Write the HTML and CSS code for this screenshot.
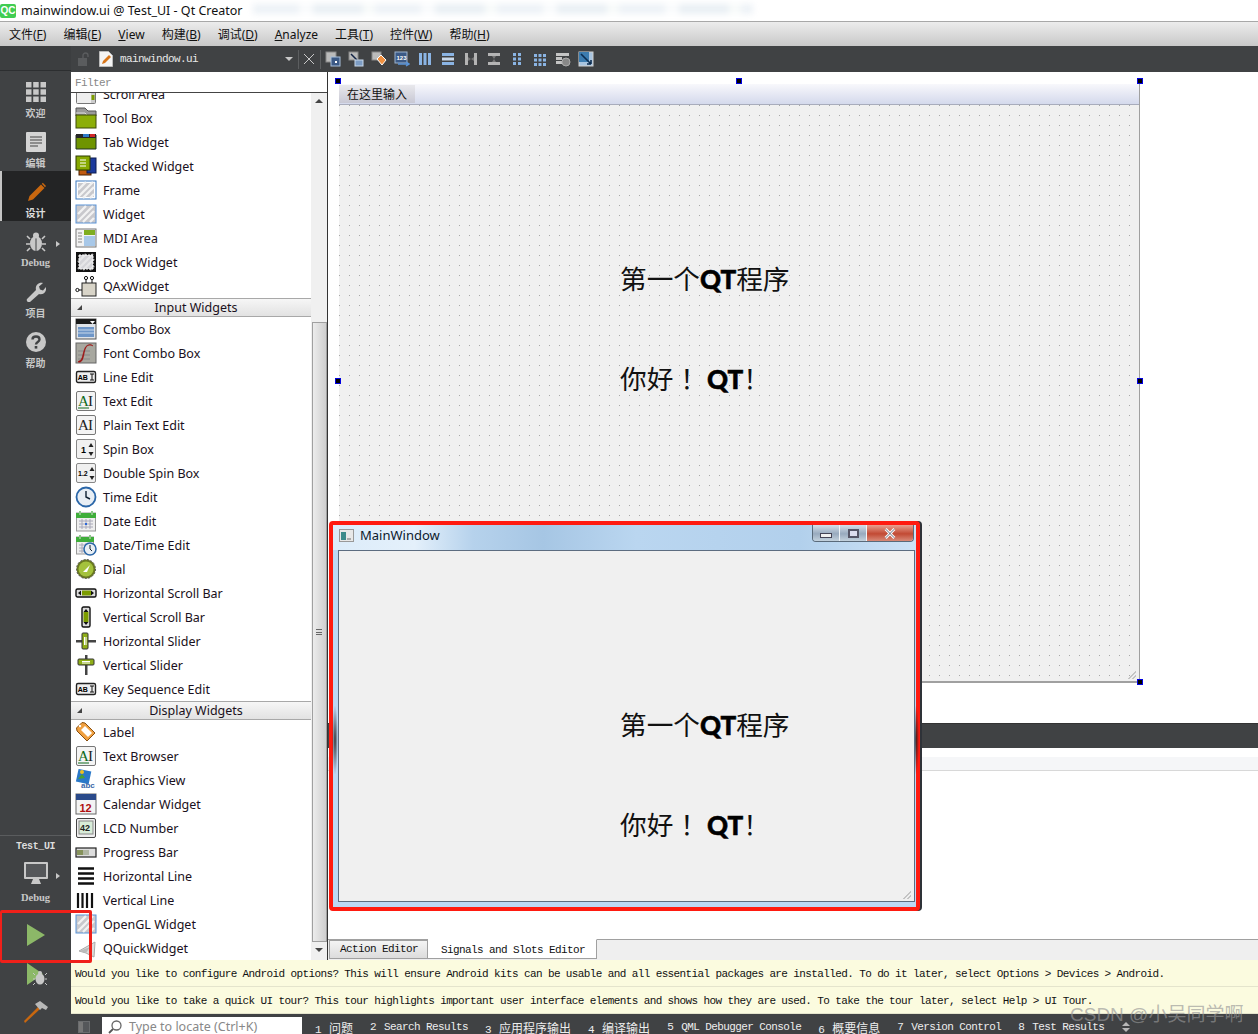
FILE: index.html
```html
<!DOCTYPE html>
<html lang="zh">
<head>
<meta charset="utf-8">
<title>mainwindow.ui @ Test_UI - Qt Creator</title>
<link rel="stylesheet" href="styles.css">
</head>
<body>
<svg class="defs" width="0" height="0" aria-hidden="true">
<defs>
<g id="hatch"><path d="M3 11l8-8M3 18L18 3M8 19L19 8M15 19l4-4" stroke="#f2f2f2" stroke-width="2.4" fill="none"/></g>
<symbol id="i-scroll" viewBox="0 0 22 22"><rect x="1.5" y="1.5" width="19" height="19" rx="1" fill="#eee" stroke="#777"/><rect x="16" y="2" width="4" height="18" fill="#ccc"/><rect x="16.5" y="12" width="3" height="5" fill="#7c9c00"/></symbol>
<symbol id="i-tool" viewBox="0 0 22 22"><path d="M1 1h9l3 3h8v5H1z" fill="#9a9a9a" stroke="#555"/><path d="M1 6h9l3 3h8M1 9h20" stroke="#ddd" fill="none"/><rect x="1" y="8" width="20" height="13" fill="#8cae08" stroke="#3c4a08"/></symbol>
<symbol id="i-tab" viewBox="0 0 22 22"><path d="M1 4h20v14H1z" fill="#6f9400" stroke="#232"/><rect x="1" y="3" width="20" height="4" fill="#262626"/><rect x="8" y="3" width="6" height="3" fill="#2d7ac8"/><rect x="15" y="3" width="5" height="3" fill="#d02828"/></symbol>
<symbol id="i-stack" viewBox="0 0 22 22"><rect x="4" y="9" width="12" height="11" fill="#c05a10" stroke="#4a2000"/><rect x="12" y="3" width="9" height="15" fill="#1c3a9c" stroke="#0c1c50"/><rect x="1" y="1" width="14" height="14" fill="#86a800" stroke="#2c3a00"/><path d="M5 5h6M5 8h6M5 11h6" stroke="#fff" stroke-width="1"/></symbol>
<symbol id="i-frame" viewBox="0 0 22 22"><rect x="1" y="2" width="20" height="18" fill="#fff" stroke="#3a78c0"/><rect x="3" y="4" width="16" height="14" fill="#c8c8cc"/><use href="#hatch"/></symbol>
<symbol id="i-widget" viewBox="0 0 22 22"><rect x="1" y="2" width="20" height="18" fill="#c8c8cc" stroke="#5a94d8"/><use href="#hatch"/></symbol>
<symbol id="i-mdi" viewBox="0 0 22 22"><rect x="1" y="2" width="20" height="18" fill="#f2f2f2" stroke="#777"/><rect x="9" y="3" width="11" height="5" fill="#7fae20"/><rect x="9" y="9" width="11" height="10" fill="#a8c8e8"/><path d="M3 6h4M3 9h4M3 12h4M3 15h4" stroke="#888"/></symbol>
<symbol id="i-dock" viewBox="0 0 22 22"><rect x="1" y="1" width="20" height="20" fill="#111"/><rect x="4" y="4" width="14" height="14" fill="#d4d4d8" stroke="#fff" stroke-dasharray="2 1"/><use href="#hatch" opacity=".6"/></symbol>
<symbol id="i-qax" viewBox="0 0 22 22"><rect x="7" y="8" width="14" height="13" fill="#d8d4c8" stroke="#222"/><path d="M11 8V4M17 8V4M7 15H3" stroke="#111"/><circle cx="11" cy="3" r="1.6" fill="#fff" stroke="#111"/><circle cx="17" cy="3" r="1.6" fill="#fff" stroke="#111"/><circle cx="2.4" cy="15" r="1.6" fill="#fff" stroke="#111"/></symbol>
<symbol id="i-combo" viewBox="0 0 22 22"><rect x="1" y="1" width="20" height="20" fill="#dfe3e8" stroke="#555"/><rect x="1" y="1" width="20" height="5" fill="#1c1c1c"/><path d="M15 3h5l-2.500 3z" fill="#fff"/><rect x="3" y="9" width="16" height="10" fill="#6e96c8"/><path d="M3 12h16M3 15h16" stroke="#c8d8ea"/></symbol>
<symbol id="i-font" viewBox="0 0 22 22"><rect x="1" y="1" width="20" height="20" fill="#a8a8a0" stroke="#666"/><path d="M3 9h12M3 13h12M3 17h12" stroke="#888"/><path d="M3 20c4 1 5-3 6-8s2-9 6-9c2 0 3 1 3 1-2-2-6-2-8 2s-2 9-4 12c-1 1-3 1-3 2z" fill="#9c1010" stroke="#9c1010" stroke-width=".6"/></symbol>
<symbol id="i-line" viewBox="0 0 22 22"><rect x="1.500" y="5.500" width="19" height="11" rx="1.500" fill="#eee" stroke="#222" stroke-width="1.400"/><text x="2.800" y="14" class="ic-t ic-7">AB</text><path d="M15 8h4M15 14h4M17 8v6" stroke="#111"/></symbol>
<symbol id="i-text" viewBox="0 0 22 22"><rect x="1.500" y="1.500" width="19" height="19" rx="1.500" fill="#f4f4f4" stroke="#777"/><text x="3" y="16" class="ic-s" fill="#0f6a1c">A</text><path d="M3 18h11" stroke="#0f6a1c"/><text x="13" y="16" class="ic-s" fill="#222">I</text></symbol>
<symbol id="i-plain" viewBox="0 0 22 22"><rect x="1.500" y="1.500" width="19" height="19" rx="1.500" fill="#f4f4f4" stroke="#777"/><text x="3" y="16" class="ic-s" fill="#222">A</text><text x="13" y="16" class="ic-s" fill="#222">I</text></symbol>
<symbol id="i-spin" viewBox="0 0 22 22"><rect x="1.500" y="1.500" width="19" height="19" rx="1.500" fill="#f0f0f0" stroke="#888"/><text x="6" y="15" class="ic-t ic-9">1</text><path d="M16 5l2.500 4h-5zM16 18l2.500-4h-5z" fill="#222"/></symbol>
<symbol id="i-dspin" viewBox="0 0 22 22"><rect x="1.500" y="1.500" width="19" height="19" rx="1.500" fill="#f0f0f0" stroke="#888"/><text x="3" y="14" class="ic-t ic-7">1.2</text><path d="M17 5l2.500 4h-5zM17 18l2.500-4h-5z" fill="#222"/></symbol>
<symbol id="i-time" viewBox="0 0 22 22"><circle cx="11" cy="11" r="9.500" fill="#e8eef4" stroke="#2a66a8" stroke-width="1.800"/><path d="M11 5v6l4 2" stroke="#123" stroke-width="1.400" fill="none"/></symbol>
<symbol id="i-date" viewBox="0 0 22 22"><rect x="1.500" y="3" width="19" height="18" fill="#eee" stroke="#999"/><rect x="1" y="3" width="20" height="5" fill="#3fae3a"/><path d="M5 1v4M17 1v4" stroke="#8cc888" stroke-width="2"/><path d="M4 11h14M4 14h14M4 17h14M7 9v10M11 9v10M15 9v10" stroke="#a8a8b8"/><rect x="10" y="13" width="2" height="2" fill="#2a66d8"/></symbol>
<symbol id="i-dt" viewBox="0 0 22 22"><rect x="1.500" y="3" width="17" height="17" fill="#eee" stroke="#999"/><rect x="1" y="3" width="18" height="5" fill="#3fae3a"/><path d="M5 1v4M15 1v4" stroke="#8cc888" stroke-width="2"/><path d="M4 11h12M4 14h12M4 17h12M7 9v10M11 9v10" stroke="#a8a8b8"/><circle cx="15" cy="15" r="6" fill="#e8eef4" stroke="#2a66a8" stroke-width="1.500"/><path d="M15 11v4l2 2" stroke="#123" fill="none"/></symbol>
<symbol id="i-dial" viewBox="0 0 22 22"><circle cx="11" cy="11" r="9.500" fill="#6a7a20" stroke-dasharray="2 1.500" stroke="#555"/><circle cx="11" cy="11" r="7.500" fill="#a4c23c"/><path d="M8 14l7-7-3 7z" fill="#fff"/></symbol>
<symbol id="i-hscr" viewBox="0 0 22 22"><rect x="1" y="7" width="20" height="8" rx="1.500" fill="#ddd" stroke="#111" stroke-width="1.400"/><rect x="7" y="8.500" width="9" height="5" fill="#7c9c00"/><path d="M3 11l3-2.500v5zM19 11l-3-2.500v5z" fill="#111"/></symbol>
<symbol id="i-vscr" viewBox="0 0 22 22"><rect x="7" y="1" width="8" height="20" rx="1.500" fill="#ddd" stroke="#111" stroke-width="1.400"/><rect x="8.500" y="6" width="5" height="10" fill="#7c9c00"/><path d="M11 3l-2.500 3h5zM11 19l-2.500-3h5z" fill="#111"/></symbol>
<symbol id="i-hsl" viewBox="0 0 22 22"><rect x="1" y="10" width="20" height="2.500" fill="#444"/><rect x="7" y="3" width="6" height="16" rx="1" fill="#8fae18" stroke="#333"/><path d="M9.500 7v8M11 7v8" stroke="#fff"/></symbol>
<symbol id="i-vsl" viewBox="0 0 22 22"><rect x="10" y="1" width="2.500" height="20" fill="#444"/><rect x="3" y="5" width="16" height="6" rx="1" fill="#8fae18" stroke="#333"/><path d="M7 7.500h8M7 9h8" stroke="#fff"/></symbol>
<symbol id="i-label" viewBox="0 0 22 22"><path d="M1.500 7L7 1.500l3 .5 10 10-8 8L2 10z" fill="#f0a040" stroke="#8a5010"/><path d="M6 9l4-4 7 7-4 4z" fill="#fff"/><circle cx="5" cy="5" r="1.200" fill="#fff"/></symbol>
<symbol id="i-graph" viewBox="0 0 22 22"><rect x="2" y="1" width="13" height="13" fill="#2a78c8" transform="rotate(12 8 8)"/><path d="M3 10l4-5 3 4z" fill="#4aa030"/><circle cx="7" cy="3" r="2" fill="#f0c020"/><text x="6" y="19" class="ic-t ic-9b" fill="#3a66a8">abc</text></symbol>
<symbol id="i-cal" viewBox="0 0 22 22"><rect x="1" y="1" width="20" height="20" fill="#f4f4f4" stroke="#666"/><rect x="1" y="1" width="20" height="6" fill="#2a4a8a"/><text x="4.500" y="19" class="ic-t ic-11" fill="#b01010">12</text></symbol>
<symbol id="i-lcd" viewBox="0 0 22 22"><rect x="1.500" y="1.500" width="19" height="19" rx="1.500" fill="#eee" stroke="#444"/><rect x="4" y="4" width="14" height="13" fill="#d8ecd8" stroke="#888"/><text x="5" y="14" class="ic-t ic-9" fill="#222">42</text></symbol>
<symbol id="i-prog" viewBox="0 0 22 22"><rect x="1" y="7" width="20" height="9" fill="#ddd" stroke="#222" stroke-width="1.200"/><path d="M3 9v5M5 9v5M7 9v5" stroke="#6a7a30" stroke-width="1.500"/><path d="M9 9v5M11 9v5M13 9v5" stroke="#a0a890" stroke-width="1.500"/></symbol>
<symbol id="i-hline" viewBox="0 0 22 22"><path d="M3 3.500h16M3 8.500h16M3 13.500h16M3 18.500h16" stroke="#111" stroke-width="2.600"/></symbol>
<symbol id="i-vline" viewBox="0 0 22 22"><path d="M3 4v15M7.500 4v15M12 4v15M17 4v15" stroke="#111" stroke-width="2.200"/></symbol>
<symbol id="i-quick" viewBox="0 0 22 22"><path d="M4 14L20 5l-1 15-8-4z" fill="#ddd" stroke="#aaa"/><path d="M4 14l11-4-4 6z" fill="#bbb"/></symbol>
<symbol id="t-a" viewBox="0 0 16 16"><rect x="1" y="1" width="10" height="10" fill="#bbb" stroke="#888"/><rect x="6" y="6" width="9" height="9" fill="#3c5a86" stroke="#a8c0dc"/><rect x="10" y="10" width="2" height="2" fill="#fff"/></symbol>
<symbol id="t-b" viewBox="0 0 16 16"><rect x="1" y="1" width="9" height="8" fill="#bbb" stroke="#888"/><path d="M3 3l6 6" stroke="#124" stroke-width="1.500"/><rect x="7" y="9" width="8" height="6" fill="#7c9cc4" stroke="#c8d8ea"/></symbol>
<symbol id="t-c" viewBox="0 0 16 16"><rect x="1" y="1" width="9" height="8" fill="#bbb" stroke="#888"/><path d="M6 8l4-4 5 5-4 5z" fill="#f09040" stroke="#fff"/></symbol>
<symbol id="t-d" viewBox="0 0 16 16"><rect x="1" y="1" width="12" height="11" fill="#3c5a86" stroke="#9cb4d0"/><path d="M4 13h10M12 11l3 2-3 2" stroke="#5a94d8" fill="none" stroke-width="1.500"/><text x="2.500" y="9" class="ic-t ic-6" fill="#fff">123</text></symbol>
<symbol id="t-e" viewBox="0 0 16 16"><rect x="2" y="2" width="3" height="12" fill="#8ab4e4"/><rect x="6.500" y="2" width="3" height="12" fill="#8ab4e4"/><rect x="11" y="2" width="3" height="12" fill="#8ab4e4"/></symbol>
<symbol id="t-f" viewBox="0 0 16 16"><rect x="2" y="2" width="12" height="3" fill="#8ab4e4"/><rect x="2" y="6.500" width="12" height="3" fill="#c8d8ea"/><rect x="2" y="11" width="12" height="3" fill="#8ab4e4"/></symbol>
<symbol id="t-g" viewBox="0 0 16 16"><path d="M2 2h3v12H2zM11 2h3v12h-3z" fill="#b4b4b4"/><path d="M5 6l3 2-3 2zM11 6L8 8l3 2z" fill="#777"/></symbol>
<symbol id="t-h" viewBox="0 0 16 16"><path d="M2 2h12v3H2zM2 11h12v3H2z" fill="#b4b4b4"/><path d="M6 5l2 3 2-3zM6 11l2-3 2 3z" fill="#777"/></symbol>
<symbol id="t-i" viewBox="0 0 16 16"><path d="M4 2h3v3H4zM9 2h3v3H9zM4 6.500h3v3H4zM9 6.500h3v3H9zM4 11h3v3H4zM9 11h3v3H9z" fill="#8ab4e4"/></symbol>
<symbol id="t-j" viewBox="0 0 16 16"><path d="M2 3h3v3H2zM6.500 3h3v3h-3zM11 3h3v3h-3zM2 7.500h3v3H2zM6.500 7.500h3v3h-3zM11 7.500h3v3h-3zM2 12h3v3H2zM6.500 12h3v3h-3zM11 12h3v3h-3z" fill="#8ab4e4"/></symbol>
<symbol id="t-k" viewBox="0 0 16 16"><path d="M1 2h13v3H1zM1 6h6v3H1zM1 10h6v3H1z" fill="#c4c4c4"/><circle cx="11" cy="11" r="4" fill="#888" stroke="#aaa"/></symbol>
<symbol id="t-l" viewBox="0 0 16 16"><rect x="1" y="1" width="14" height="14" fill="#a8c4e0" stroke="#d0d0d0"/><rect x="1" y="1" width="10" height="10" fill="#3c7cb0"/><path d="M3 3l10 10M13 13v-4M13 13H9" stroke="#0c2c50" stroke-width="1.600" fill="none"/></symbol>
</defs>
</svg>

<header class="titlebar">
  <span class="qc">QC</span>
  <span class="title-text">mainwindow.ui @ Test_UI - Qt Creator</span>
  <span class="smudge"></span>
</header>
<nav class="menubar">
  <span>文件(<u>F</u>)</span><span>编辑(<u>E</u>)</span><span><u>V</u>iew</span><span>构建(<u>B</u>)</span><span>调试(<u>D</u>)</span><span><u>A</u>nalyze</span><span>工具(<u>T</u>)</span><span>控件(<u>W</u>)</span><span>帮助(<u>H</u>)</span>
</nav>

<div class="app">
  <aside class="sidebar">
    <div class="side-top"></div>
    <div class="mode">
      <svg class="mi" viewBox="0 0 20 20"><path d="M0 0h5.500v5.500H0zM7.200 0h5.500v5.500H7.200zM14.500 0H20v5.500h-5.500zM0 7.200h5.500v5.500H0zM7.200 7.200h5.500v5.500H7.200zM14.500 7.200H20v5.500h-5.500zM0 14.500h5.500V20H0zM7.200 14.500h5.500V20H7.200zM14.500 14.500H20V20h-5.500z" fill="#c8c8c8"/></svg>
      <span>欢迎</span>
    </div>
    <div class="mode">
      <svg class="mi" viewBox="0 0 20 20"><rect width="20" height="20" rx="1" fill="#d4d4d4"/><path d="M4 5h12M4 8h12M4 11h12M4 14h8" stroke="#444" stroke-width="1.100"/></svg>
      <span>编辑</span>
    </div>
    <div class="mode active">
      <svg class="mi" viewBox="0 0 20 20"><path d="M2 19l1.500-5L15 2.500l3.500 3.500L7 17.500z" fill="#c8670f"/><path d="M15.800 1.800l1-1 3.200 3.200-1 1.200z" fill="#c8670f"/></svg>
      <span>设计</span>
    </div>
    <div class="mode">
      <svg class="mi" viewBox="0 0 20 20"><ellipse cx="10" cy="11.500" rx="6" ry="7.500" fill="#c8c8c8"/><path d="M10 4v15" stroke="#404244"/><circle cx="10" cy="3.500" r="3" fill="#c8c8c8"/><path d="M4 7L1 4M4 12H0M4 16l-3 3M16 7l3-3M16 12h4M16 16l3 3" stroke="#c8c8c8" stroke-width="1.600"/></svg>
      <span class="serif">Debug</span>
      <i class="caret"></i>
    </div>
    <div class="mode">
      <svg class="mi" viewBox="0 0 20 20"><path d="M1 17L10 8c-1-4 2-8 7-7l-4 3.500 1 3 3 1L20 5c1 5-3 8-7 7l-9 8c-2 1-4-1-3-3z" fill="#c8c8c8"/></svg>
      <span>项目</span>
    </div>
    <div class="mode">
      <svg class="mi" viewBox="0 0 20 20"><circle cx="10" cy="10" r="10" fill="#c8c8c8"/><path d="M6.500 7.500C6.500 3.500 13.500 3.500 13.500 7.500c0 2.500-3.500 2.500-3.500 5" fill="none" stroke="#404244" stroke-width="2.400"/><rect x="8.700" y="14" width="2.600" height="2.600" fill="#404244"/></svg>
      <span>帮助</span>
    </div>
    <div class="kit">
      <span class="kit-name">Test_UI</span>
      <svg class="monitor" viewBox="0 0 26 24"><rect x="1" y="1" width="24" height="17" rx="1" fill="#c8c8c8"/><rect x="3" y="3" width="20" height="13" fill="#55575a"/><path d="M10 18h6l2 5H8z" fill="#c8c8c8"/></svg>
      <span class="serif">Debug</span>
      <i class="caret kit-caret"></i>
    </div>
    <div class="act act-run"><svg width="18" height="22" viewBox="0 0 18 22"><path d="M0 0l18 11L0 22z" fill="#8cb868"/></svg></div>
    <div class="act act-dbg"><svg width="20" height="24" viewBox="0 0 20 24"><path d="M0 0l16 11L0 22z" fill="#8cb868"/><ellipse cx="13" cy="16" rx="4.500" ry="5.500" fill="#c8c8c8"/><circle cx="13" cy="10" r="2" fill="#c8c8c8"/><path d="M8 12l-2-2M8 16H6M8 20l-2 2M18 12l2-2M18 16h2M18 20l2 2M13 11v10" stroke="#c8c8c8"/></svg></div>
    <div class="act act-build"><svg width="24" height="24" viewBox="0 0 24 24"><path d="M1 23l-1-2L14 7l2 2z" fill="#c8670f"/><path d="M11 4l5-3 8 6-2 3-4-2-2 2z" fill="#b8b8b8"/></svg></div>
  </aside>

  <div class="main">
    <div class="toolbar">
      <div class="tb-left">
        <svg class="lock" viewBox="0 0 14 14"><rect x="1" y="6" width="9" height="8" fill="#5a5c5e"/><path d="M6 6V3.500a2.500 2.500 0 0 1 5 0V5" fill="none" stroke="#5a5c5e" stroke-width="1.400"/></svg>
        <svg class="doc" viewBox="0 0 14 16"><path d="M.5.500h9l4 4v11H.500z" fill="#f4f4f4" stroke="#bbb"/><path d="M3 13l1-3 6-6 2 2-6 6z" fill="#d8761a"/></svg>
        <span class="fname">mainwindow.ui</span>
        <i class="tb-arrow"></i>
        <i class="tb-sep"></i>
        <svg class="tb-x" viewBox="0 0 10 10"><path d="M0 0l10 10M10 0L0 10" stroke="#c8c8c8"/></svg>
        <i class="tb-sep"></i>
      </div>
      <div class="tb-icons">
        <svg><use href="#t-a"/></svg><svg><use href="#t-b"/></svg><svg><use href="#t-c"/></svg><svg><use href="#t-d"/></svg><svg><use href="#t-e"/></svg><svg><use href="#t-f"/></svg><svg><use href="#t-g"/></svg><svg><use href="#t-h"/></svg><svg><use href="#t-i"/></svg><svg><use href="#t-j"/></svg><svg><use href="#t-k"/></svg><svg><use href="#t-l"/></svg>
      </div>
    </div>

    <div class="workspace">
      <section class="box">
        <div class="filter">Filter</div>
        <div class="box-body">
          <ul class="list">
            <li class="row"><svg><use href="#i-scroll"/></svg>Scroll Area</li>
            <li class="row"><svg><use href="#i-tool"/></svg>Tool Box</li>
            <li class="row"><svg><use href="#i-tab"/></svg>Tab Widget</li>
            <li class="row"><svg><use href="#i-stack"/></svg>Stacked Widget</li>
            <li class="row"><svg><use href="#i-frame"/></svg>Frame</li>
            <li class="row"><svg><use href="#i-widget"/></svg>Widget</li>
            <li class="row"><svg><use href="#i-mdi"/></svg>MDI Area</li>
            <li class="row"><svg><use href="#i-dock"/></svg>Dock Widget</li>
            <li class="row"><svg><use href="#i-qax"/></svg>QAxWidget</li>
            <li class="cat"><i></i>Input Widgets</li>
            <li class="row"><svg><use href="#i-combo"/></svg>Combo Box</li>
            <li class="row"><svg><use href="#i-font"/></svg>Font Combo Box</li>
            <li class="row"><svg><use href="#i-line"/></svg>Line Edit</li>
            <li class="row"><svg><use href="#i-text"/></svg>Text Edit</li>
            <li class="row"><svg><use href="#i-plain"/></svg>Plain Text Edit</li>
            <li class="row"><svg><use href="#i-spin"/></svg>Spin Box</li>
            <li class="row"><svg><use href="#i-dspin"/></svg>Double Spin Box</li>
            <li class="row"><svg><use href="#i-time"/></svg>Time Edit</li>
            <li class="row"><svg><use href="#i-date"/></svg>Date Edit</li>
            <li class="row"><svg><use href="#i-dt"/></svg>Date/Time Edit</li>
            <li class="row"><svg><use href="#i-dial"/></svg>Dial</li>
            <li class="row"><svg><use href="#i-hscr"/></svg>Horizontal Scroll Bar</li>
            <li class="row"><svg><use href="#i-vscr"/></svg>Vertical Scroll Bar</li>
            <li class="row"><svg><use href="#i-hsl"/></svg>Horizontal Slider</li>
            <li class="row"><svg><use href="#i-vsl"/></svg>Vertical Slider</li>
            <li class="row"><svg><use href="#i-line"/></svg>Key Sequence Edit</li>
            <li class="cat"><i></i>Display Widgets</li>
            <li class="row"><svg><use href="#i-label"/></svg>Label</li>
            <li class="row"><svg><use href="#i-text"/></svg>Text Browser</li>
            <li class="row"><svg><use href="#i-graph"/></svg>Graphics View</li>
            <li class="row"><svg><use href="#i-cal"/></svg>Calendar Widget</li>
            <li class="row"><svg><use href="#i-lcd"/></svg>LCD Number</li>
            <li class="row"><svg><use href="#i-prog"/></svg>Progress Bar</li>
            <li class="row"><svg><use href="#i-hline"/></svg>Horizontal Line</li>
            <li class="row"><svg><use href="#i-vline"/></svg>Vertical Line</li>
            <li class="row"><svg><use href="#i-widget"/></svg>OpenGL Widget</li>
            <li class="row"><svg><use href="#i-quick"/></svg>QQuickWidget</li>
          </ul>
          <div class="scrollbar">
            <i class="sb-up"></i>
            <div class="sb-thumb"><i></i></div>
            <i class="sb-down"></i>
          </div>
        </div>
      </section>

      <section class="designer">
        <div class="canvas">
          <div class="form">
            <i class="h h-tl"></i><i class="h h-tm"></i><i class="h h-tr"></i><i class="h h-ml"></i><i class="h h-mr"></i><i class="h h-br"></i>
            <div class="form-menu"><span>在这里输入</span></div>
            <div class="form-grid"><i class="grip"></i></div>
            <p class="qline q1">第一个<b>QT</b>程序</p>
            <p class="qline q2">你好 ！<b>QT</b>！</p>
          </div>
        </div>
        <div class="dark-band"></div>
        <div class="gap9"></div>
        <div class="strip"></div>
        <div class="white-fill"></div>
        <div class="editor-tabs">
          <span class="etab">Action Editor</span>
          <span class="etab on">Signals and Slots Editor</span>
        </div>
      </section>
    </div>

    <div class="info">Would you like to configure Android options? This will ensure Android kits can be usable and all essential packages are installed. To do it later, select Options &gt; Devices &gt; Android.</div>
    <div class="info">Would you like to take a quick UI tour? This tour highlights important user interface elements and shows how they are used. To take the tour later, select Help &gt; UI Tour.</div>

    <footer class="status">
      <svg class="toggle" viewBox="0 0 12 12"><rect x=".5" y=".5" width="11" height="11" fill="#55575a" stroke="#6a6c6e"/><rect x="1" y="1" width="4" height="10" fill="#777"/></svg>
      <div class="locator">
        <svg viewBox="0 0 14 14"><circle cx="8.500" cy="5.500" r="4.500" fill="none" stroke="#666" stroke-width="1.300"/><path d="M5 9l-4 4" stroke="#555" stroke-width="1.800"/></svg>
        <span>Type to locate (Ctrl+K)</span>
      </div>
      <div class="otabs">
        <span><b>1</b><em>问题</em></span>
        <span><b>2</b>Search Results</span>
        <span><b>3</b><em>应用程序输出</em></span>
        <span><b>4</b><em>编译输出</em></span>
        <span><b>5</b>QML Debugger Console</span>
        <span><b>6</b><em>概要信息</em></span>
        <span><b>7</b>Version Control</span>
        <span><b>8</b>Test Results</span>
        <svg class="updown" viewBox="0 0 8 10"><path d="M4 0l4 4H0zM4 10L0 6h8z" fill="#b8b8b8"/></svg>
      </div>
    </footer>
  </div>
</div>

<div class="preview">
  <i class="ghost ghost-l"></i><i class="ghost ghost-r"></i>
  <div class="pv-title">
    <svg class="pv-icon" viewBox="0 0 15 13"><rect x=".5" y=".5" width="14" height="12" fill="#e8e8e8" stroke="#999"/><rect x="2" y="3" width="5" height="8" fill="#3c8a8a"/><rect x="8" y="9" width="4" height="2" fill="#aaa"/></svg>
    <span>MainWindow</span>
    <div class="pv-btns">
      <span class="b-min"><i></i></span>
      <span class="b-max"><i></i></span>
      <span class="b-close"><svg viewBox="0 0 12 10"><path d="M2 1l8 8M10 1L2 9" stroke="#fff" stroke-width="2.600"/><path d="M2 1l8 8M10 1L2 9" stroke="#556" stroke-width=".8"/></svg></span>
    </div>
  </div>
  <div class="pv-client">
    <p class="qline p1">第一个<b>QT</b>程序</p>
    <p class="qline p2">你好 ！<b>QT</b>！</p>
    <i class="grip"></i>
  </div>
</div>

<div class="run-mark"></div>
<div class="watermark">CSDN @小吴同学啊</div>
</body>
</html>
```

FILE: styles.css
```css
* { box-sizing: border-box; }
html, body { margin: 0; padding: 0; }
body {
  width: 1258px;
  height: 1034px;
  overflow: hidden;
  position: relative;
  background: #fff;
  color: #111;
  font-family: "Noto Sans", "Noto Sans CJK SC", sans-serif;
  font-size: 12.500px;
}
.defs { position: absolute; }
.ic-t { font-family: "Liberation Sans", sans-serif; font-weight: 700; }
.ic-6 { font-size: 6px; }
.ic-7 { font-size: 7px; }
.ic-9 { font-size: 9px; }
.ic-9b { font-size: 8px; }
.ic-11 { font-size: 11px; }
.ic-s { font-family: "Liberation Serif", serif; font-size: 15px; }

/* title + menu */
.titlebar {
  height: 22px;
  display: flex;
  align-items: center;
  background: #fff;
  border-bottom: 1px solid #a8a8a8;
  overflow: hidden;
}
.qc {
  width: 16px;
  height: 14px;
  background: #41cd52;
  color: #fff;
  font: 700 10px/14px "Liberation Sans", sans-serif;
  text-align: center;
  border-radius: 2px;
}
.title-text { margin: 0 0 0 5px; font-size: 12.500px; white-space: nowrap; color: #111; width: 232px; }
.smudge {
  width: 500px;
  height: 10px;
  margin-top: -3px;
  opacity: .3;
  filter: blur(3px);
  background: repeating-linear-gradient(90deg, #c4d4e4 0 46px, #eef4f8 46px 60px, #b8ccdc 60px 110px, #e8f2f0 110px 122px);
}
.menubar {
  height: 24px;
  display: flex;
  align-items: center;
  gap: 17px;
  padding-left: 9px;
  background: linear-gradient(#ececec, #c8c8c8);
  font-size: 12px;
  color: #111;
}
.menubar span { white-space: nowrap; }

/* app frame */
.app { display: flex; height: 988px; }
.sidebar {
  width: 71px;
  flex: none;
  display: flex;
  flex-direction: column;
  background: #404244;
  color: #c8c8c8;
  position: relative;
}
.side-top { height: 25px; flex: none; border-bottom: 1px solid #2c2e30; background: #3c3e40; }
.mode {
  height: 50px;
  flex: none;
  display: flex;
  flex-direction: column;
  align-items: center;
  padding-top: 11px;
  position: relative;
  font-size: 10px;
  font-weight: 700;
  line-height: 14px;
}
.mi { width: 20px; height: 20px; flex: none; margin-bottom: 4px; }
.mode.active { background: #232425; border-left: 2px solid #c4c4c4; padding-right: 2px; color: #ddd; }
.serif { font-family: "Liberation Serif", serif; font-size: 10.500px; font-weight: 700; }
.caret {
  position: absolute;
  right: 11px;
  top: 20px;
  border-left: 4px solid #c8c8c8;
  border-top: 3.500px solid transparent;
  border-bottom: 3.500px solid transparent;
}
.kit {
  margin-top: auto;
  height: 75px;
  flex: none;
  border-top: 1px solid #5a5c5e;
  display: flex;
  flex-direction: column;
  align-items: center;
  padding-top: 4px;
  position: relative;
  font-size: 10px;
  line-height: 13px;
}
.kit-name { font-family: "Liberation Mono", monospace; font-size: 10px; font-weight: 700; color: #ddd; letter-spacing: -.4px; }
.monitor { width: 26px; height: 24px; margin: 8px 0 6px; }
.kit-caret { top: 37px; }
.act { display: flex; justify-content: center; align-items: center; flex: none; }
.act-run { height: 50px; }
.act-dbg { height: 30px; padding-left: 2px; }
.act-build { height: 44px; }

.main { flex: 1; min-width: 0; display: flex; flex-direction: column; }

/* toolbar */
.toolbar {
  height: 26px;
  flex: none;
  display: flex;
  align-items: center;
  background: #404244;
}
.tb-left { width: 250px; flex: none; display: flex; align-items: center; padding-left: 6px; }
.lock { width: 14px; height: 14px; }
.doc { width: 14px; height: 16px; margin-left: 8px; }
.fname {
  font-family: "Liberation Mono", monospace;
  font-size: 11px;
  letter-spacing: -.6px;
  color: #e8e8e8;
  margin-left: 7px;
  flex: 1;
}
.tb-arrow {
  width: 0;
  border-top: 4px solid #c8c8c8;
  border-left: 4px solid transparent;
  border-right: 4px solid transparent;
  margin-right: 5px;
}
.tb-sep { width: 1px; height: 19px; background: #5c5e60; }
.tb-x { width: 10px; height: 10px; margin: 0 6px 0 5px; }
.tb-icons { display: flex; }
.tb-icons svg { width: 16px; height: 16px; margin: 0 3.500px; }

/* widget box */
.workspace { flex: 1; min-height: 0; display: flex; }
.box {
  width: 257px;
  flex: none;
  display: flex;
  flex-direction: column;
  border-right: 1px solid #333;
  background: #fff;
}
.filter {
  height: 21px;
  flex: none;
  background: #fff;
  border-bottom: 1px solid #444;
  font-family: "Liberation Mono", monospace;
  font-size: 11px;
  letter-spacing: -.6px;
  color: #888;
  line-height: 22px;
  padding-left: 4px;
}
.box-body { flex: 1; min-height: 0; display: flex; overflow: hidden; }
.list { flex: 1; margin: -11px 0 0; padding: 0; list-style: none; color: #1a1020; }
.row { height: 24px; display: flex; align-items: center; padding-left: 4px; white-space: nowrap; }
.row svg { width: 22px; height: 22px; flex: none; margin-right: 6px; }
.cat {
  height: 19px;
  display: flex;
  align-items: center;
  justify-content: center;
  padding-left: 10px;
  position: relative;
  background: linear-gradient(#f6f6f6, #e2e2e2);
  border-top: 1px solid #a8a8a8;
  border-bottom: 1px solid #a8a8a8;
}
.cat i {
  position: absolute;
  left: 6px;
  top: 6px;
  border-bottom: 5px solid #444;
  border-left: 5px solid transparent;
}
.scrollbar {
  width: 16px;
  flex: none;
  display: flex;
  flex-direction: column;
  align-items: center;
  background: #f0f0f0;
}
.sb-up { border-bottom: 4px solid #444; border-left: 4px solid transparent; border-right: 4px solid transparent; margin-top: 6px; }
.sb-thumb {
  margin-top: 219px;
  width: 15px;
  height: 620px;
  border: 1px solid #a0a0a0;
  background: linear-gradient(90deg, #ececec, #cfcfcf);
  display: flex;
  align-items: center;
  justify-content: center;
}
.sb-thumb i { width: 6px; height: 6px; border-top: 1px solid #666; border-bottom: 1px solid #666; position: relative; }
.sb-thumb i::after { content: ""; position: absolute; left: 0; right: 0; top: 1.500px; height: 1px; background: #666; }
.sb-down { border-top: 4px solid #444; border-left: 4px solid transparent; border-right: 4px solid transparent; margin-top: 6px; }

/* designer */
.designer { flex: 1; min-width: 0; display: flex; flex-direction: column; background: #fff; }
.canvas { height: 651px; flex: none; padding: 12px 0 0 11px; }
.form {
  width: 801px;
  height: 599px;
  position: relative;
  display: flex;
  flex-direction: column;
  border-right: 1px solid #a0a0a0;
  border-bottom: 2px solid #a0a0a0;
  background: #f0f0f0;
}
.form-menu {
  height: 21px;
  flex: none;
  background: linear-gradient(#f8f8fc, #d4d9ec);
  border-bottom: 1px solid #a8acbc;
  font-size: 12px;
  line-height: 21px;
}
.form-menu span { display: inline-block; width: 76px; height: 18px; line-height: 19px; margin-top: 1px; padding-left: 8px; background: linear-gradient(#e8e8ec, #c8c8d4); vertical-align: top; color: #111; }
.form-grid {
  flex: 1;
  position: relative;
  background:
    linear-gradient(to right, transparent 1px, #f0f0f0 1px) 0 0 / 10px 10px,
    linear-gradient(to bottom, transparent 1px, #f0f0f0 1px) 0 0 / 10px 10px,
    #a8a8a8;
}
.grip {
  position: absolute;
  right: 3px;
  bottom: 2px;
  width: 8px;
  height: 8px;
  background: linear-gradient(135deg, transparent 50%, #c4c4c4 50%, #c4c4c4 60%, transparent 60%, transparent 72%, #c4c4c4 72%, #c4c4c4 82%, transparent 82%);
}
.h { position: absolute; width: 6px; height: 6px; background: #000; border: 1px solid #0000e0; z-index: 2; }
.h-tl { left: -4px; top: -6px; }
.h-tm { left: 397px; top: -6px; }
.h-tr { right: -4px; top: -6px; }
.h-ml { left: -4px; top: 294px; }
.h-mr { right: -4px; top: 294px; }
.h-br { right: -4px; bottom: -4px; }
.qline {
  position: absolute;
  left: 281px;
  margin: 0;
  font-size: 26.670px;
  line-height: 36px;
  font-weight: 400;
  white-space: nowrap;
  color: #111;
}
.qline b {
  font-family: Lato, "Liberation Sans", sans-serif;
  font-weight: 900;
  font-size: 26px;
  color: #000;
  -webkit-text-stroke: .5px #000;
}
.q1 { top: 177px; }
.q2 { top: 277px; }

.dark-band { height: 25px; flex: none; background: #404244; border-top: 1px solid #333; }
.gap9 { height: 9px; flex: none; }
.strip { height: 14px; flex: none; background: #f5f6f8; border-bottom: 1px solid #d8d8d8; }
.white-fill { flex: 1; min-height: 0; }
.editor-tabs {
  height: 21px;
  flex: none;
  display: flex;
  padding-left: 1px;
  background: #efefef;
  border-top: 1px solid #a0a0a0;
  font-family: "Liberation Mono", monospace;
  font-size: 11px;
  letter-spacing: -.6px;
  color: #111;
}
.etab {
  width: 99px;
  height: 19px;
  padding-left: 10px;
  line-height: 17px;
  border: 1px solid #a0a0a0;
  background: linear-gradient(#f4f4f4, #dcdcdc);
}
.etab.on {
  width: 169px;
  height: 20px;
  margin-top: -1px;
  padding-left: 13px;
  line-height: 20px;
  background: #fff;
  border-width: 0 1px 1px 0;
  border-top: 1px solid #fff;
}

/* bars */
.info {
  height: 27px;
  flex: none;
  background: #fbfbdf;
  border-bottom: 1px solid #e4e4cc;
  font-family: "Liberation Mono", monospace;
  font-size: 11px;
  letter-spacing: -.615px;
  line-height: 29px;
  padding-left: 4px;
  white-space: nowrap;
  color: #111;
}
.status {
  height: 20px;
  flex: none;
  display: flex;
  align-items: flex-end;
  background: #404244;
  overflow: hidden;
}
.toggle { width: 12px; height: 12px; margin: 0 12px 1px 7px; flex: none; }
.locator {
  width: 200px;
  height: 17px;
  flex: none;
  background: #fff;
  display: flex;
  align-items: center;
  padding: 2px 0 0 6px;
  font-size: 12.500px;
  color: #888;
}
.locator svg { width: 14px; height: 14px; margin-right: 7px; }
.otabs {
  display: flex;
  align-items: center;
  gap: 17px;
  margin-left: 13px;
  height: 17px;
  padding-top: 3px;
  font-family: "Liberation Mono", "Noto Sans CJK SC", monospace;
  font-size: 11px;
  letter-spacing: -.6px;
  color: #eee;
  white-space: nowrap;
}
.otabs b { font-weight: 400; margin-right: 8px; }
.otabs em { font-style: normal; font-family: "Noto Sans CJK SC", sans-serif; font-size: 12px; letter-spacing: 0; }
.updown { width: 8px; height: 10px; margin-left: 1px; }

/* floating preview window */
.preview {
  position: absolute;
  left: 329px;
  top: 521px;
  width: 591px;
  height: 390px;
  border: 4px solid #ff1a10;
  border-radius: 4px;
  background: #bcd8f4;
  box-shadow: 2px 0 0 #2e3238;
  display: flex;
  flex-direction: column;
  padding: 0 1px 5px 5px;
  z-index: 5;
}
.pv-title {
  height: 25px;
  flex: none;
  margin: 0 -1px 0 -5px;
  padding: 0 0 5px 6px;
  display: flex;
  align-items: center;
  gap: 6px;
  font-size: 13px;
  background: linear-gradient(90deg, #dcecfa 0, #e4f0fb 14%, #b6d2ec 24%, #a6c6e4 36%, #bad6f0 52%, #b2d0ec 80%, #cde2f6 100%);
  color: #0c1a2c;
}
.pv-icon { width: 15px; height: 13px; }
.pv-btns {
  display: flex;
  margin-left: auto;
  height: 17px;
  align-self: flex-start;
  margin-right: 2px;
  border: 1px solid #5a6a7a;
  border-top: 0;
  border-radius: 0 0 4px 4px;
  overflow: hidden;
}
.pv-btns span { display: flex; align-items: center; justify-content: center; height: 16px; }
.b-min, .b-max { width: 27px; background: linear-gradient(#d4dfea, #98aabe 55%, #c4d2de); border-right: 1px solid #f0f4f8; }
.b-min i { width: 12px; height: 5px; margin-top: 4px; background: #f0f0f0; border: 1px solid #445; }
.b-max i { width: 11px; height: 9px; background: #dde; border: 2px solid #556; }
.b-close { width: 46px; background: linear-gradient(#e8a090, #c24a34 55%, #d88a78); }
.b-close svg { width: 14px; height: 11px; }
.pv-client {
  flex: 1;
  position: relative;
  background: #f0f0f0;
  border: 1px solid #5c6c80;
}
.p1 { top: 156px; left: 281px; }
.p2 { top: 256px; left: 281px; }
.ghost { position: absolute; top: 180px; width: 6px; height: 70px; background: radial-gradient(closest-side, rgba(30,30,30,.85), rgba(30,30,30,0)); }
.ghost-l { left: -1px; }
.ghost-r { right: -3px; }

/* annotations */
.run-mark {
  position: absolute;
  left: 0;
  top: 910px;
  width: 92px;
  height: 53px;
  border: 3px solid #f0201a;
  border-left-width: 2px;
  border-radius: 2px;
  z-index: 6;
}
.watermark {
  position: absolute;
  left: 1070px;
  top: 1003px;
  font-family: "Liberation Sans", "Noto Sans CJK SC", sans-serif;
  font-size: 19px;
  line-height: 24px;
  color: rgba(150, 150, 150, .65);
  white-space: nowrap;
  z-index: 6;
}
```
